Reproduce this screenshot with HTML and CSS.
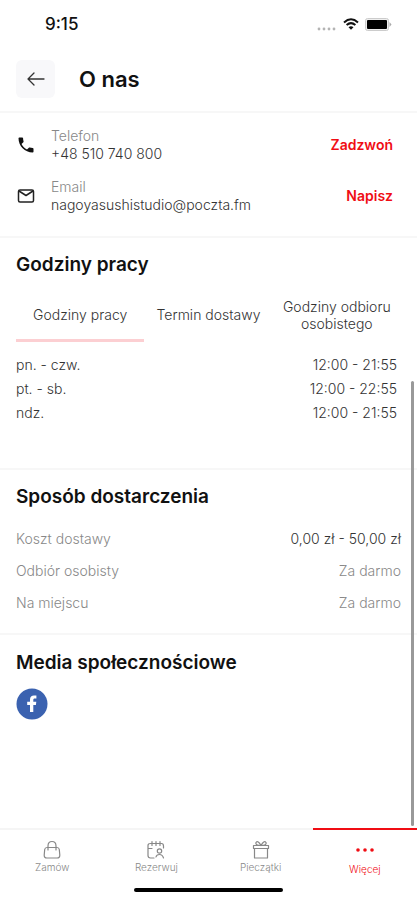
FILE: index.html
```html
<!DOCTYPE html>
<html lang="pl">
<head>
<meta charset="utf-8">
<meta name="viewport" content="width=device-width, initial-scale=1">
<title>O nas</title>
<link rel="stylesheet" href="styles.css">
</head>
<body>
<div class="app">
  <div class="status">
    <span class="time">9:15</span>
    <div class="status-icons">
      <svg width="20" height="4" viewBox="0 0 20 4" fill="#b4b4b4"><circle cx="2" cy="2" r="1.4"/><circle cx="7" cy="2" r="1.4"/><circle cx="12" cy="2" r="1.4"/><circle cx="17" cy="2" r="1.4"/></svg>
      <svg width="16" height="12" viewBox="0 0 16 12" fill="none" stroke="#111" stroke-width="2"><path d="M1 4.400Q8-1.800 15 4.400M3.600 7Q8 3.200 12.400 7"/><path d="M8 11.800 5.500 9.200Q8 7.200 10.500 9.200Z" fill="#111" stroke="none"/></svg>
      <svg width="27" height="13" viewBox="0 0 27 13"><rect x=".5" y=".5" width="23" height="12" rx="2" fill="#eee" stroke="#ccc"/><rect x="2" y="2" width="20" height="9" rx="1" fill="#000"/><path d="M24.500 4 26.500 6.500 24.500 9Z" fill="#aaa"/></svg>
    </div>
  </div>

  <header class="header">
    <button class="back" type="button" aria-label="Wstecz">
      <svg width="18" height="14" viewBox="0 0 18 14" fill="none" stroke="#333" stroke-width="1.300" stroke-linecap="round" stroke-linejoin="round"><path d="M17 7H1M7 1 1 7l6 6"/></svg>
    </button>
    <h1>O nas</h1>
  </header>

  <main class="content">
    <section class="contacts">
      <div class="contact">
        <svg class="contact-icon" width="20" height="20" viewBox="0 0 24 24" fill="#111"><path d="M6.620 10.790c1.440 2.830 3.760 5.140 6.590 6.590l2.200-2.200c.27-.27.67-.36 1.020-.24 1.120.37 2.330.57 3.570.57.55 0 1 .45 1 1V20c0 .55-.45 1-1 1-9.390 0-17-7.610-17-17 0-.55.45-1 1-1h3.500c.55 0 1 .45 1 1 0 1.250.2 2.450.57 3.570.11.35.03.74-.25 1.020z"/></svg>
        <div class="contact-text"><span class="label">Telefon</span><span>+48 510 740 800</span></div>
        <a class="action" href="tel:+48510740800">Zadzwoń</a>
      </div>
      <div class="contact">
        <svg class="contact-icon" width="20" height="20" viewBox="0 0 20 20" fill="none" stroke="#222" stroke-width="1.500" stroke-linejoin="round"><rect x="2.500" y="4" width="15" height="12" rx="1.500"/><path d="M3 5l7 4.500L17 5"/></svg>
        <div class="contact-text"><span class="label">Email</span><span>nagoyasushistudio@poczta.fm</span></div>
        <a class="action" href="mailto:nagoyasushistudio@poczta.fm">Napisz</a>
      </div>
    </section>

    <section class="hours">
      <h2>Godziny pracy</h2>
      <div class="tabs" role="tablist">
        <button class="tab selected" type="button" role="tab" aria-selected="true">Godziny pracy</button>
        <button class="tab" type="button" role="tab" aria-selected="false">Termin dostawy</button>
        <button class="tab" type="button" role="tab" aria-selected="false">Godziny odbioru osobistego</button>
      </div>
      <table class="hours-table">
        <tr><th scope="row">pn. - czw.</th><td>12:00 - 21:55</td></tr>
        <tr><th scope="row">pt. - sb.</th><td>12:00 - 22:55</td></tr>
        <tr><th scope="row">ndz.</th><td>12:00 - 21:55</td></tr>
      </table>
    </section>

    <section class="delivery">
      <h2>Sposób dostarczenia</h2>
      <table class="delivery-table">
        <tr><th scope="row">Koszt dostawy</th><td class="price">0,00 zł - 50,00 zł</td></tr>
        <tr><th scope="row">Odbiór osobisty</th><td>Za darmo</td></tr>
        <tr><th scope="row">Na miejscu</th><td>Za darmo</td></tr>
      </table>
    </section>

    <section class="social">
      <h2>Media społecznościowe</h2>
      <a class="facebook" href="#" aria-label="Facebook">
        <svg width="32" height="32" viewBox="0 0 32 32"><circle cx="16" cy="16" r="15.500" fill="#3b62b0"/><path d="M14 24v-7h-2.800v-3.200H14v-2.300c0-2.700 1.600-4.100 4-4.100h2.400v3h-1.600c-1.200 0-1.500.6-1.500 1.500v1.900h3l-.4 3.200h-2.600v7Z" fill="#fff"/></svg>
      </a>
    </section>
    <div class="scroll-thumb"></div>
  </main>

  <nav class="nav">
    <a class="nav-item" href="#">
      <svg width="20" height="20" viewBox="0 0 20 20" fill="none" stroke="#888" stroke-width="1.200" stroke-linejoin="round"><path d="M5 7.500h10Q17 7.500 17.300 9.500l.5 5.500Q18 18 15 18H5Q2 18 2.200 15l.5-5.500Q3 7.500 5 7.500Z"/><path d="M6 10V6Q6 1.500 10 1.500T14 6v4" stroke-linecap="round"/></svg>
      <span>Zamów</span>
    </a>
    <a class="nav-item" href="#">
      <svg width="20" height="20" viewBox="0 0 20 20" fill="none" stroke="#888" stroke-width="1.200" stroke-linecap="round"><path d="M8 18H4.500Q2 18 2 15.500v-10Q2 3.500 4.500 3.500h11Q17.500 3.500 17.500 6v2M6 1.500v4M10 1.500v4M14 1.500v4M2 8.500h4"/><circle cx="13.500" cy="11" r="2.200"/><path d="M10 17q.5-2.500 3.500-2.500t4 3.500"/></svg>
      <span>Rezerwuj</span>
    </a>
    <a class="nav-item" href="#">
      <svg width="20" height="20" viewBox="0 0 20 20" fill="none" stroke="#888" stroke-width="1.200" stroke-linejoin="round"><rect x="2.500" y="5.500" width="15" height="3"/><path d="M3.500 8.500V18h13V8.500M10 5.500Q4 5.500 5 2.500 7 0 10 5.500 13 0 15 2.500 16 5.500 10 5.500"/></svg>
      <span>Pieczątki</span>
    </a>
    <a class="nav-item active" href="#" aria-current="page">
      <svg width="20" height="20" viewBox="0 0 20 20" fill="#f00d14"><circle cx="3" cy="10" r="1.800"/><circle cx="10" cy="10" r="1.800"/><circle cx="17" cy="10" r="1.800"/></svg>
      <span>Więcej</span>
    </a>
  </nav>
  <div class="home-indicator"></div>
</div>
</body>
</html>
```
FILE: styles.css
```css
* {
  box-sizing: border-box;
}

body {
  margin: 0;
  background: #fff;
  color: #333;
  font: 300 14px/18px Inter, "Liberation Sans", sans-serif;
}

h1,
h2 {
  margin: 0;
  color: #111;
  font-weight: 600;
}

h1 {
  font-size: 22px;
  line-height: 28px;
}

h2 {
  font-size: 19px;
  line-height: 24px;
}

a {
  text-decoration: none;
}

button {
  border: 0;
  padding: 0;
  background: none;
  color: inherit;
  font: inherit;
}

svg {
  display: block;
  flex: none;
}

.app {
  display: flex;
  flex-direction: column;
  min-height: 100vh;
}

.status {
  display: flex;
  align-items: center;
  justify-content: space-between;
  height: 48px;
  padding: 0 25px 0 45px;
}

.time {
  color: #111;
  font-size: 17px;
  font-weight: 500;
}

.status-icons {
  display: flex;
  align-items: center;
  gap: 6px;
}

.status-icons svg:first-child {
  align-self: flex-end;
}

.header {
  display: flex;
  align-items: center;
  gap: 24px;
  padding: 12px 16px 13px;
  border-bottom: 2px solid #f7f7f7;
}

.back {
  display: grid;
  place-items: center;
  width: 39px;
  height: 38px;
  border-radius: 6px;
  background: #f8f8fa;
}

.content {
  position: relative;
  flex: 1;
}

.content section {
  padding: 15px 16px;
}

.content section:not(.social) {
  border-bottom: 2px solid #f7f7f7;
}

.content .contacts {
  display: flex;
  flex-direction: column;
  gap: 15px;
  padding: 14px 24px 22px 16px;
}

.contact {
  display: flex;
  align-items: center;
  gap: 15px;
}

.contact-text {
  display: flex;
  flex: 1;
  flex-direction: column;
}

.label {
  color: #888;
}

.action {
  color: #f00d14;
  font-weight: 600;
}

.content .hours {
  padding-bottom: 43px;
}

.tabs {
  display: grid;
  grid-template-columns: repeat(3, 1fr);
  margin-top: 13px;
}

.tab {
  height: 52px;
  border-bottom: 3px solid transparent;
  line-height: 17px;
}

.tab.selected {
  border-color: #fccfd2;
}

table {
  width: 100%;
  border-collapse: collapse;
}

th,
td {
  padding: 0;
  font-weight: 300;
  text-align: left;
}

td {
  text-align: right;
}

.hours-table {
  margin-top: 11px;
}

.hours-table tr {
  height: 24px;
}

.hours-table td {
  padding-right: 4px;
}

.content .delivery {
  padding-bottom: 14px;
}

.delivery-table {
  margin-top: 14px;
  color: #888;
}

.delivery-table tr {
  height: 32px;
}

.delivery-table .price {
  color: #333;
}

.content .social {
  padding-top: 16px;
}

.facebook {
  display: inline-block;
  margin-top: 13px;
}

.scroll-thumb {
  position: absolute;
  top: 268px;
  right: 3px;
  bottom: 2px;
  width: 3px;
  border-radius: 2px;
  background: #999;
}

.nav {
  display: grid;
  grid-template-columns: repeat(4, 1fr);
}

.nav-item {
  display: flex;
  flex-direction: column;
  align-items: center;
  padding: 10px 0 11px;
  border-top: 2px solid #f5f5f5;
  color: #888;
  font-size: 10px;
  line-height: 15px;
}

.nav-item.active {
  border-color: #f00d14;
  color: #f00d14;
}

.nav-item.active span {
  padding-top: 2px;
}

.home-indicator {
  width: 149px;
  height: 4px;
  margin: 0 auto 8px;
  border-radius: 2px;
  background: #000;
}
```
